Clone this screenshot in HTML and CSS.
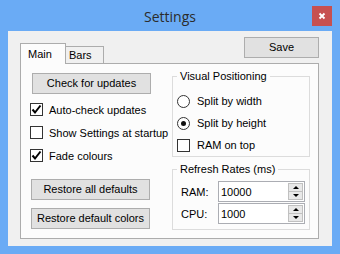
FILE: index.html
```html
<!DOCTYPE html>
<html lang="en">
<head>
    <meta charset="UTF-8">
    <title>Settings</title>
    <link rel="stylesheet" href="styles.css">
</head>
<body>
    <div class="window">
        <div class="titlebar">
            <span></span>
            <div class="title">Settings</div>
            <div class="close">
                <svg width="8" height="8" viewBox="0 0 8 8"><path d="M1.5 1.5 L6.5 6.5 M6.5 1.5 L1.5 6.5" stroke="#fff" stroke-width="1.8"/></svg>
            </div>
        </div>
        <div class="client">
            <div class="head">
                <div class="tabs">
                    <div class="tab active">Main</div>
                    <div class="tab">Bars</div>
                </div>
                <div class="btn save">Save</div>
            </div>
            <div class="page">
                <div class="col-left">
                    <div class="btn wide check-btn">Check for updates</div>
                    <div class="options">
                        <div class="row"><span class="box checked"><svg width="11" height="11" viewBox="0 0 11 11"><path d="M1.5 5.5 L4 8.5 L9.5 1.5" fill="none" stroke="#000" stroke-width="2"/></svg></span>Auto-check updates</div>
                        <div class="row"><span class="box"></span>Show Settings at startup</div>
                        <div class="row"><span class="box checked"><svg width="11" height="11" viewBox="0 0 11 11"><path d="M1.5 5.5 L4 8.5 L9.5 1.5" fill="none" stroke="#000" stroke-width="2"/></svg></span>Fade colours</div>
                    </div>
                    <div class="btn wide restore">Restore all defaults</div>
                    <div class="btn wide restore second">Restore default colors</div>
                </div>
                <div class="col-right">
                    <fieldset class="group">
                        <legend>Visual Positioning</legend>
                        <div class="group-body positioning">
                            <div class="row tight"><span class="radio"></span>Split by width</div>
                            <div class="row tight"><span class="radio on"></span>Split by height</div>
                            <div class="row tight"><span class="box"></span>RAM on top</div>
                        </div>
                    </fieldset>
                    <fieldset class="group rates">
                        <legend>Refresh Rates (ms)</legend>
                        <div class="group-body">
                            <div class="rate">
                                <span class="rate-label">RAM:</span>
                                <div class="num"><span class="num-val">10000</span><div class="spin"><div class="spin-btn"><i class="up"></i></div><div class="spin-btn"><i class="down"></i></div></div></div>
                            </div>
                            <div class="rate">
                                <span class="rate-label">CPU:</span>
                                <div class="num"><span class="num-val">1000</span><div class="spin"><div class="spin-btn"><i class="up"></i></div><div class="spin-btn"><i class="down"></i></div></div></div>
                            </div>
                        </div>
                    </fieldset>
                </div>
            </div>
        </div>
    </div>
</body>
</html>
```

FILE: styles.css
```css
html, body {
    margin: 0;
    padding: 0;
    background-color: #6aabf5;
    font-family: "Liberation Sans", Arial, sans-serif;
    font-size: 11px;
    color: #000;
}
.window {
    width: 340px;
    height: 254px;
    box-sizing: border-box;
}
.titlebar {
    height: 31px;
    display: grid;
    grid-template-columns: 1fr auto 1fr;
    align-items: center;
}
.title {
    font-family: "Open Sans", "Noto Sans", sans-serif;
    font-size: 14px;
    color: #2b2b2b;
    line-height: 31px;
    padding-top: 1px;
}
.close {
    justify-self: end;
    align-self: start;
    margin-top: 6px;
    margin-right: 8px;
    width: 20px;
    height: 20px;
    background-color: #c75050;
    display: flex;
    align-items: center;
    justify-content: center;
}
.client {
    margin: 0 8px;
    height: 215px;
    background-color: #f0f0f0;
    padding: 0 13px 0 12px;
    box-sizing: border-box;
}
.head {
    height: 32px;
    display: flex;
    justify-content: space-between;
    align-items: flex-end;
}
.tabs {
    display: flex;
    align-items: flex-end;
}
.tab {
    box-sizing: border-box;
    border: 1px solid #acacac;
    border-bottom: none;
    background-color: #f0f0f0;
    height: 17px;
    width: 38px;
    padding-left: 3px;
    border-left: none;
    line-height: 16px;
}
.tab.active {
    position: relative;
    background-color: #fcfcfc;
    border-left: 1px solid #acacac;
    height: 21px;
    width: 46px;
    margin-bottom: -1px;
    padding-left: 7px;
    line-height: 20px;
}
.btn {
    box-sizing: border-box;
    border: 1px solid #adadad;
    background-color: #e1e1e1;
    height: 21px;
    line-height: 19px;
    text-align: center;
}
.save {
    align-self: flex-start;
    margin-top: 6px;
    width: 75px;
}
.page {
    height: 176px;
    box-sizing: border-box;
    border: 1px solid #acacac;
    background-color: #fcfcfc;
    display: flex;
}
.col-left {
    width: 151px;
}
.wide {
    width: 119px;
}
.check-btn {
    margin: 9px 0 0 11px;
}
.options {
    margin-top: 4px;
    padding-left: 9px;
}
.row {
    height: 23px;
    display: flex;
    align-items: center;
}
.row.tight {
    height: 22px;
}
.box {
    width: 13px;
    height: 13px;
    box-sizing: border-box;
    border: 1px solid #333;
    background-color: #fff;
    margin-right: 6px;
    display: flex;
    align-items: center;
    justify-content: center;
    flex-shrink: 0;
}
.radio {
    width: 13px;
    height: 13px;
    box-sizing: border-box;
    border: 1px solid #333;
    border-radius: 50%;
    background-color: #fff;
    margin-right: 7px;
    display: flex;
    align-items: center;
    justify-content: center;
}
.radio.on::after {
    content: "";
    width: 5px;
    height: 5px;
    border-radius: 50%;
    background-color: #111;
}
.positioning .box {
    margin-right: 7px;
}
.restore {
    margin: 12px 0 0 10px;
}
.restore.second {
    margin-top: 8px;
}
.group {
    margin: 6px 0 0 0;
    padding: 0;
    width: 138px;
    box-sizing: border-box;
    border: 1px solid #dcdcdc;
}
.group legend {
    margin-left: 4px;
    padding: 0 3px;
    line-height: 13px;
}
.positioning {
    padding: 7px 0 0 4px;
}
.rates .group-body {
    padding: 5px 0 5px 8px;
}
.rate {
    display: flex;
    align-items: center;
    height: 21px;
    margin-bottom: 1px;
}
.rate:last-child {
    margin-bottom: 0;
}
.rate-label {
    width: 37px;
}
.num {
    width: 87px;
    height: 21px;
    box-sizing: border-box;
    border: 1px solid #abadb3;
    background-color: #fff;
    display: flex;
    align-items: center;
    justify-content: space-between;
}
.num-val {
    padding-left: 2px;
}
.spin {
    width: 15px;
    height: 17px;
    margin-right: 1px;
    display: flex;
    flex-direction: column;
}
.spin-btn {
    flex: 1;
    box-sizing: border-box;
    border: 1px solid #c0c0c0;
    background-color: #e8e8e8;
    display: flex;
    align-items: center;
    justify-content: center;
}
.spin-btn + .spin-btn {
    border-top: none;
}
.up, .down {
    width: 0;
    height: 0;
    border-left: 3px solid transparent;
    border-right: 3px solid transparent;
}
.up {
    border-bottom: 3px solid #000;
}
.down {
    border-top: 3px solid #000;
}
```
